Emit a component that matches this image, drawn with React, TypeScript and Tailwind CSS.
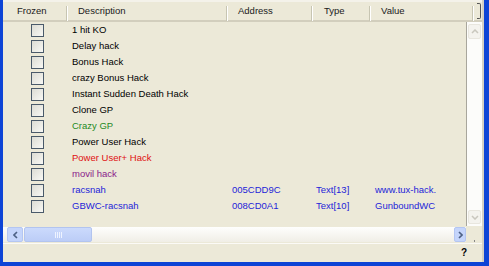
const rows = [
  { d: '1 hit KO', c: 'text-black' },
  { d: 'Delay hack', c: 'text-black' },
  { d: 'Bonus Hack', c: 'text-black' },
  { d: 'crazy Bonus Hack', c: 'text-black' },
  { d: 'Instant Sudden Death Hack', c: 'text-black' },
  { d: 'Clone GP', c: 'text-black' },
  { d: 'Crazy GP', c: 'text-[#1f8a1f]' },
  { d: 'Power User Hack', c: 'text-black' },
  { d: 'Power User+ Hack', c: 'text-[#e01010]' },
  { d: 'movil hack', c: 'text-[#8a1a8a]' },
  { d: 'racsnah', a: '005CDD9C', t: 'Text[13]', v: 'www.tux-hack.', c: 'text-[#2424d8]' },
  { d: 'GBWC-racsnah', a: '008CD0A1', t: 'Text[10]', v: 'GunboundWC', c: 'text-[#2424d8]' },
];

function HeaderCell({ label, w, pl }: { label: string; w: string; pl: string }) {
  return (
    <div className={`${w} ${pl} h-full flex items-center relative shrink-0`}>
      <span>{label}</span>
      <span className="absolute right-0 top-[4px] h-[15px] w-[2px] border-l border-[#c7c5b2] border-r border-r-white" />
    </div>
  );
}

function Checkbox() {
  return (
    <div className="w-[13px] h-[13px] border border-[#4a5a6a] bg-gradient-to-br from-[#dcdcd4] to-[#f8f8f4]" />
  );
}

export default function App() {
  return (
    <div className="w-[489px] h-[266px] bg-[#0d44d6] pl-[3px] pr-[5px] pb-[4px] flex flex-col font-['Liberation_Sans',Arial,sans-serif] text-[9.5px] leading-none">
      <div className="flex-1 bg-[#ece9d8] flex flex-col border-r-2 border-[#d4d0c4]">
        {/* header */}
        <div className="h-[22px] flex border-t-2 border-[#f4f2ea] border-b-2 border-b-[#d2cebd] text-[#1a1a1a]">
          <HeaderCell label="Frozen" w="w-[65px]" pl="pl-[14px]" />
          <HeaderCell label="Description" w="w-[160px]" pl="pl-[10px]" />
          <HeaderCell label="Address" w="w-[85px]" pl="pl-[10px]" />
          <HeaderCell label="Type" w="w-[58px]" pl="pl-[11px]" />
          <HeaderCell label="Value" w="w-[103px]" pl="pl-[10px]" />
          <div className="flex-1 flex items-center pl-[3px]">
            <div className="w-[4px] h-[16px] border border-l-0 border-[#555] rounded-r-[2px]" />
          </div>
        </div>

        {/* body */}
        <div className="h-[204px] flex">
          <div className="w-[463px] flex flex-col">
            {rows.map((r) => (
              <div key={r.d} className={`h-[16px] flex items-center ${r.c}`}>
                <div className="w-[65px] pl-[28px] shrink-0">
                  <Checkbox />
                </div>
                <div className="w-[160px] pl-[4px] shrink-0">{r.d}</div>
                <div className="w-[85px] pl-[4px] shrink-0">{r.a}</div>
                <div className="w-[58px] pl-[3px] shrink-0">{r.t}</div>
                <div className="flex-1 pl-[4px]">{r.v}</div>
              </div>
            ))}
          </div>
          <div className="w-[16px] bg-[#fcfcfa] border-l border-[#a8a69c] flex flex-col justify-between py-[2px] px-[1px]">
            <div className="h-[15px] bg-[#f4f3ee] border border-[#e8e6de] rounded-[2px] flex items-center justify-center">
              <svg width="8" height="5" viewBox="0 0 8 5"><path d="M1 4 L4 1 L7 4" fill="none" stroke="#c9c7be" strokeWidth="1.5" /></svg>
            </div>
            <div className="h-[14px] bg-[#f4f3ee] border border-[#e8e6de] rounded-[2px] flex items-center justify-center">
              <svg width="8" height="5" viewBox="0 0 8 5"><path d="M1 1 L4 4 L7 1" fill="none" stroke="#c9c7be" strokeWidth="1.5" /></svg>
            </div>
          </div>
        </div>

        {/* horizontal scrollbar */}
        <div className="h-[15px] flex mt-[1px]">
          <div className="w-[463px] flex items-stretch bg-gradient-to-b from-[#fefefd] to-[#f0eee6] pl-[4px]">
            <div className="w-[16px] bg-[#c5d5fb] border border-[#b4c6f2] rounded-[2px] flex items-center justify-center">
              <svg width="5" height="8" viewBox="0 0 5 8"><path d="M4 1 L1 4 L4 7" fill="none" stroke="#4d6185" strokeWidth="1.6" /></svg>
            </div>
            <div className="w-[68px] ml-[1px] bg-gradient-to-b from-[#cbdafc] to-[#bccdf7] border border-[#b2c4ef] rounded-[2px] flex items-center justify-center gap-[1px]">
              <span className="w-[1px] h-[6px] bg-[#eef3ff]" />
              <span className="w-[1px] h-[6px] bg-[#eef3ff]" />
              <span className="w-[1px] h-[6px] bg-[#eef3ff]" />
              <span className="w-[1px] h-[6px] bg-[#eef3ff]" />
            </div>
            <div className="flex-1" />
            <div className="w-[12px] bg-[#c5d5fb] border border-[#b4c6f2] rounded-[2px] flex items-center justify-center">
              <svg width="5" height="8" viewBox="0 0 5 8"><path d="M1 1 L4 4 L1 7" fill="none" stroke="#4d6185" strokeWidth="1.6" /></svg>
            </div>
          </div>
          <div className="flex-1 flex items-end justify-center">
            <span className="w-[1px] h-[2px] bg-[#888]" />
          </div>
        </div>

        {/* status */}
        <div className="flex-1 border-t border-[#fbfaf6] mt-[1px] flex items-center justify-end pr-[15px] font-bold text-[10px] text-black">
          ?
        </div>
      </div>
    </div>
  );
}
